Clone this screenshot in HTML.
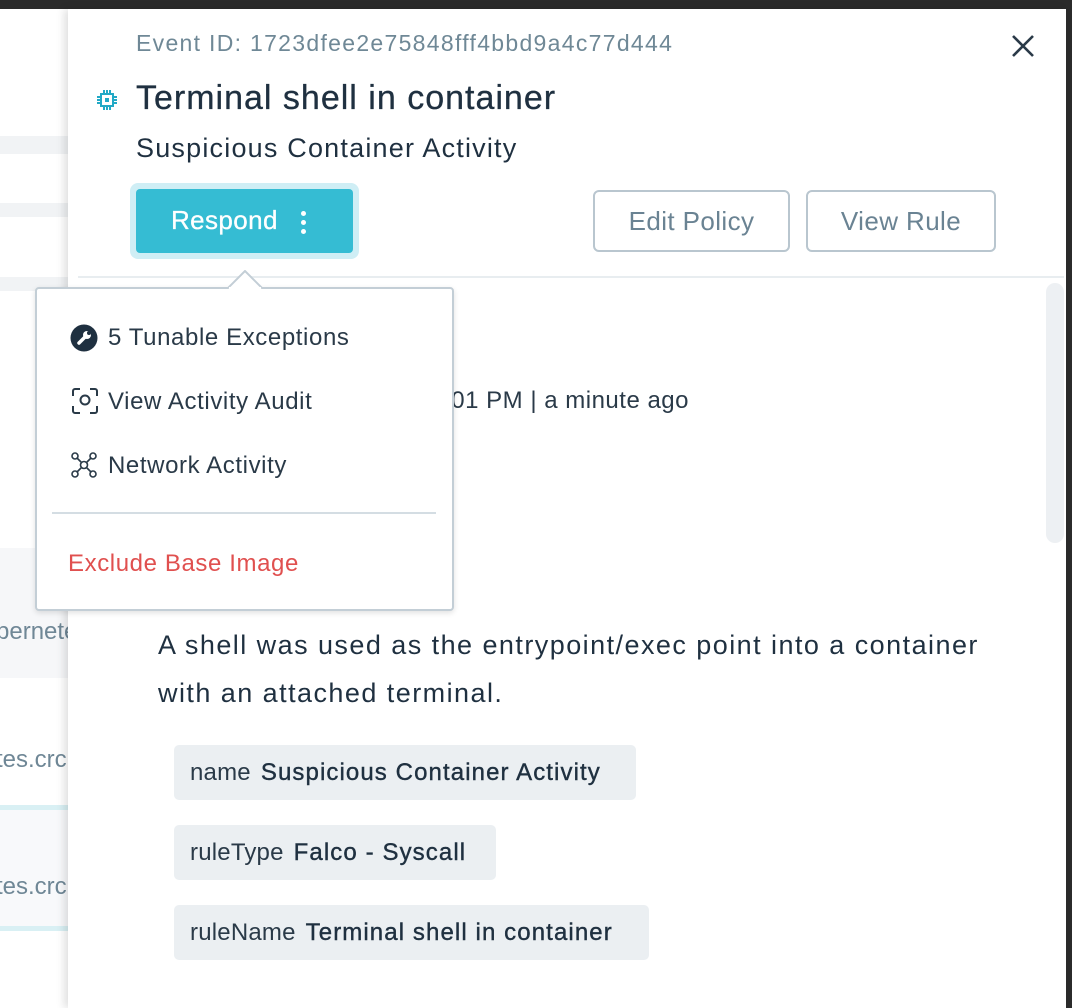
<!DOCTYPE html>
<html><head><meta charset="utf-8"><style>
*{margin:0;padding:0;box-sizing:border-box}
body{width:1072px;height:1008px;overflow:hidden;background:#fff;font-family:"Liberation Sans",sans-serif;position:relative;color:#1f3040}
.a{position:absolute;white-space:nowrap}
.stripe{position:absolute;left:0;width:68px;background:#f1f3f5}
.tag{position:absolute;left:174px;height:55px;background:#ebeff2;border-radius:5px;font-size:24px;line-height:55px;padding-left:16px;color:#2a3a48;letter-spacing:0.2px}
.tag b{font-weight:normal;color:#1f3040;margin-left:10px;-webkit-text-stroke:0.4px #1f3040;letter-spacing:1.1px}
.btn{position:absolute;top:190px;height:62px;border:2px solid #b9c6cf;border-radius:6px;color:#6a8393;font-size:26px;line-height:58px;text-align:center;letter-spacing:0.4px}
.mi{position:absolute;left:108px;font-size:24px;color:#2a3a48;letter-spacing:0.6px}
</style></head><body>
<div class="a" style="left:0;top:0;width:1072px;height:9px;background:#2b2b2b"></div>
<div class="a" style="left:1066px;top:0;width:6px;height:1008px;background:#2b2b2b"></div>
<div class="stripe" style="top:136px;height:18px"></div>
<div class="stripe" style="top:203px;height:14px"></div>
<div class="stripe" style="top:277px;height:14px"></div>
<div class="stripe" style="top:548px;height:130px;background:#f6f7f9"></div>
<div class="stripe" style="top:808px;height:118px;background:#f8f9fb"></div>
<div class="stripe" style="top:805px;height:5px;background:#d9f0f4"></div>
<div class="stripe" style="top:926px;height:5px;background:#d9f0f4"></div>
<div class="a" style="left:-4px;top:618px;font-size:24px;color:#6f8796">pernete</div>
<div class="a" style="left:-4px;top:746px;font-size:24px;color:#6f8796">tes.crc</div>
<div class="a" style="left:-4px;top:873px;font-size:24px;color:#6f8796">tes.crc</div>
<div class="a" style="left:68px;top:9px;width:998px;height:999px;background:#fff;box-shadow:-4px 0 8px rgba(0,0,0,0.12)"></div>
<div class="a" style="left:136px;top:30px;font-size:23px;letter-spacing:1.3px;color:#6f8896">Event ID: 1723dfee2e75848fff4bbd9a4c77d444</div>
<svg class="a" style="left:1010px;top:33px" width="26" height="26" viewBox="0 0 26 26"><path d="M3 3L23 23M23 3L3 23" stroke="#2a3a48" stroke-width="2.6"/></svg>
<svg class="a" style="left:96px;top:89px" width="22" height="22" viewBox="0 0 22 22" fill="none" stroke="#21a9c6" stroke-width="2"><rect x="5" y="5" width="12" height="12"/><rect x="9" y="9" width="4" height="4" fill="#21a9c6" stroke="none"/><path d="M8 1v4M11 1v4M14 1v4M8 17v4M11 17v4M14 17v4M1 8h4M1 11h4M1 14h4M17 8h4M17 11h4M17 14h4"/></svg>
<div class="a" style="left:136px;top:79px;font-size:34px;letter-spacing:1px;color:#1f3040;-webkit-text-stroke:0.3px #1f3040">Terminal shell in container</div>
<div class="a" style="left:136px;top:133px;font-size:27px;letter-spacing:1.2px;color:#1f3040">Suspicious Container Activity</div>
<div class="a" style="left:130px;top:183px;width:229px;height:76px;border-radius:8px;background:#cfeef5"></div>
<div class="a" style="left:136px;top:189px;width:217px;height:64px;border-radius:4px;background:#35bcd3;color:#fff;font-size:26px;line-height:62px;padding-left:35px;letter-spacing:0.4px;-webkit-text-stroke:0.3px #fff">Respond</div>
<div class="a" style="left:301px;top:211px;width:5px;height:5px;border-radius:50%;background:#fff"></div>
<div class="a" style="left:301px;top:220px;width:5px;height:5px;border-radius:50%;background:#fff"></div>
<div class="a" style="left:301px;top:229px;width:5px;height:5px;border-radius:50%;background:#fff"></div>
<div class="btn" style="left:593px;width:197px">Edit Policy</div>
<div class="btn" style="left:806px;width:190px">View Rule</div>
<div class="a" style="left:78px;top:276px;width:986px;height:2px;background:#e8edf0"></div>
<div class="a" style="left:1046px;top:283px;width:18px;height:260px;border-radius:9px;background:#edf0f3"></div>
<div class="a" style="right:383px;top:387px;font-size:24px;letter-spacing:0.5px;color:#2a3a48">3:27:01 PM | a minute ago</div>
<div class="a" style="left:158px;top:621px;font-size:27px;letter-spacing:1.45px;line-height:48px;color:#1f3040">A shell was used as the entrypoint/exec point into a container<br>with an attached terminal.</div>
<div class="tag" style="top:745px;width:462px">name<b>Suspicious Container Activity</b></div>
<div class="tag" style="top:825px;width:322px">ruleType<b>Falco - Syscall</b></div>
<div class="tag" style="top:905px;width:475px">ruleName<b>Terminal shell in container</b></div>
<div class="a" style="left:35px;top:287px;width:419px;height:324px;background:#fff;border:2px solid #c3ced6;border-radius:4px;box-shadow:0 2px 6px rgba(0,0,0,0.12)"></div>
<svg class="a" style="left:227px;top:270px" width="36" height="19" viewBox="0 0 36 19"><path d="M0 19L18 1L36 19" fill="#fff" stroke="#c3ced6" stroke-width="2"/><rect x="2" y="17" width="32" height="3" fill="#fff"/></svg>
<svg class="a" style="left:70px;top:324px" width="28" height="28" viewBox="0 0 28 28"><circle cx="14" cy="14" r="13.5" fill="#1f3040"/><path d="M9 19l6-6" stroke="#fff" stroke-width="3.5" stroke-linecap="round"/><circle cx="17" cy="11" r="4" fill="#fff"/><circle cx="19" cy="9" r="2" fill="#1f3040"/></svg>
<div class="mi" style="top:324px">5 Tunable Exceptions</div>
<svg class="a" style="left:72px;top:388px" width="26" height="26" viewBox="0 0 26 26" fill="none" stroke="#2a3a48" stroke-width="2"><path d="M1 8V3a2 2 0 0 1 2-2h5M18 1h5a2 2 0 0 1 2 2v5M25 18v5a2 2 0 0 1-2 2h-5M8 25H3a2 2 0 0 1-2-2v-5"/><circle cx="13" cy="12" r="4.5"/></svg>
<div class="mi" style="top:388px">View Activity Audit</div>
<svg class="a" style="left:71px;top:452px" width="26" height="26" viewBox="0 0 26 26" fill="none" stroke="#2a3a48" stroke-width="1.6"><circle cx="4" cy="4" r="3"/><circle cx="22" cy="4" r="3"/><circle cx="4" cy="22" r="3"/><circle cx="22" cy="22" r="3"/><circle cx="13" cy="13" r="3.5"/><path d="M6 6l4.5 4.5M20 6l-4.5 4.5M6 20l4.5-4.5M20 20l-4.5-4.5"/></svg>
<div class="mi" style="top:452px">Network Activity</div>
<div class="a" style="left:52px;top:512px;width:384px;height:2px;background:#d4dde3"></div>
<div class="a" style="left:68px;top:550px;font-size:24px;letter-spacing:0.6px;color:#e0504f">Exclude Base Image</div>
</body></html>
